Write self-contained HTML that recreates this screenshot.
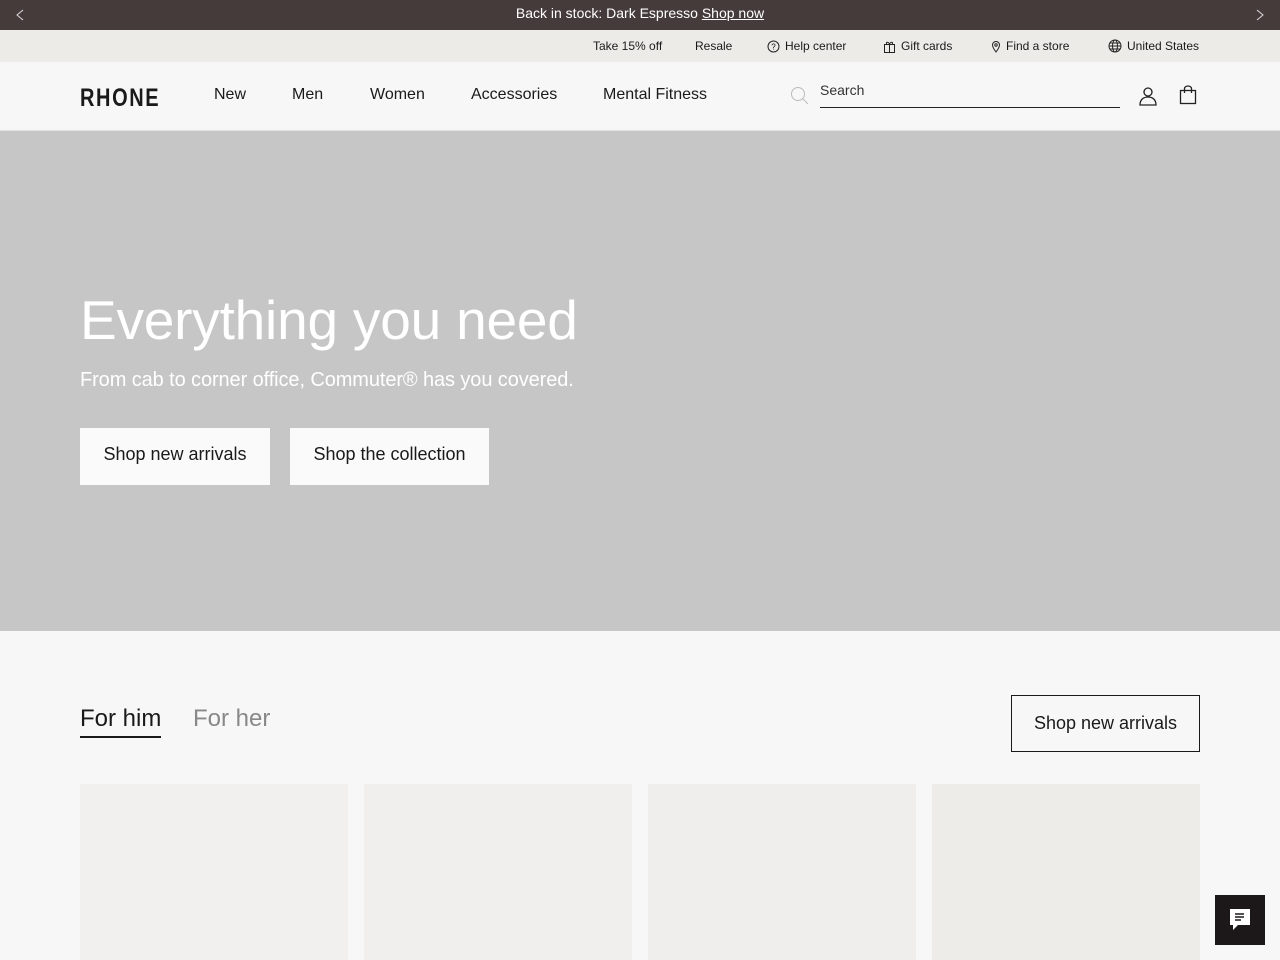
<!DOCTYPE html>
<html><head><style>
*{margin:0;padding:0;box-sizing:border-box}
body{width:1280px;height:960px;overflow:hidden;background:#f8f7f7;font-family:"Liberation Sans",sans-serif;color:#1a1a1a;position:relative}
.top{height:30px;background:#463b3b;color:#fff;font-size:14px;text-align:center;line-height:27px;position:relative}
.top u{text-decoration:underline}
.top svg{position:absolute;top:9px}
.util{height:32px;background:#ecebe8;font-size:12px;position:relative}
.util span{position:absolute;top:9px;display:flex;align-items:center;gap:5px}
.hdr{height:69px;background:#f8f7f7;border-bottom:1px solid #e3e1e0;position:relative}
.logo{position:absolute;left:80px;top:84px;font-size:25px;letter-spacing:2px;font-weight:bold;transform:scaleX(.8);transform-origin:left}
.nav{position:absolute;top:86px;font-size:16px}
.hero{position:absolute;top:131px;left:0;width:1280px;height:500px;background:#c6c6c6}
.hero h1{position:absolute;left:80px;top:157px;font-size:55px;letter-spacing:-.2px;font-weight:normal;color:#fff}
.hero p{position:absolute;left:80px;top:238px;font-size:20px;letter-spacing:-.1px;color:#fff}
.btn{position:absolute;top:297px;height:57px;background:#fafafa;font-size:18px;line-height:52px;text-align:center}
.card{position:absolute;top:784px;width:268px;height:176px;background:#efeeec}
</style></head><body>
<div class="top"><svg style="left:16px" width="8" height="12" viewBox="0 0 8 12" fill="none" stroke="#ddd"><path d="M7 1L1 6l6 5"/></svg>Back in stock: Dark Espresso <u>Shop now</u><svg style="right:16px" width="8" height="12" viewBox="0 0 8 12" fill="none" stroke="#ddd"><path d="M1 1l6 5-6 5"/></svg></div>
<div class="util">
<span style="left:593px">Take 15% off</span>
<span style="left:695px">Resale</span>
<span style="left:767px"><svg width="13" height="13" viewBox="0 0 13 13"><circle cx="6.5" cy="6.5" r="5.5" fill="none" stroke="#222"/><text x="6.5" y="9.5" font-size="8" text-anchor="middle">?</text></svg>Help center</span>
<span style="left:883px"><svg width="13" height="13" viewBox="0 0 13 13" fill="none" stroke="#222"><rect x="1.5" y="4.5" width="10" height="8"/><path d="M6.5 4.5v8M4 4.5c-2-3 2-3 2.5 0M9 4.5c2-3-2-3-2.5 0"/></svg>Gift cards</span>
<span style="left:991px"><svg width="10" height="13" viewBox="0 0 10 13" fill="none" stroke="#222"><path d="M5 12C2 8 1.5 6.5 1.5 5a3.5 3.5 0 017 0c0 1.5-.5 3-3.5 7z"/><circle cx="5" cy="5" r="1.2"/></svg>Find a store</span>
<span style="left:1108px"><svg width="14" height="14" viewBox="0 0 14 14" fill="none" stroke="#222"><circle cx="7" cy="7" r="6"/><ellipse cx="7" cy="7" rx="2.5" ry="6"/><path d="M1 7h12M2 4h10M2 10h10"/></svg>United States</span>
</div>
<div class="hdr"></div>
<div class="logo">RHONE</div>
<div class="nav" style="left:214px">New</div>
<div class="nav" style="left:292px">Men</div>
<div class="nav" style="left:370px">Women</div>
<div class="nav" style="left:471px">Accessories</div>
<div class="nav" style="left:603px">Mental Fitness</div>
<svg style="position:absolute;left:790px;top:86px" width="20" height="20" viewBox="0 0 20 20" fill="none" stroke="#bbb"><circle cx="8" cy="8" r="6.5"/><path d="M13 13l5 5"/></svg>
<div style="position:absolute;left:820px;top:82px;font-size:14px;color:#333">Search</div>
<div style="position:absolute;left:820px;top:107px;width:300px;height:1px;background:#222"></div>
<svg style="position:absolute;left:1138px;top:86px" width="20" height="20" viewBox="0 0 20 20" fill="none" stroke="#222" stroke-width="1.3"><circle cx="10" cy="6" r="4"/><path d="M2 19c0-5 3-8 8-8s8 3 8 8z"/></svg>
<svg style="position:absolute;left:1179px;top:85px" width="18" height="20" viewBox="0 0 18 20" fill="none" stroke="#222" stroke-width="1.3"><rect x="1.5" y="5.5" width="15" height="13"/><path d="M5.5 8V3.5a3.5 2.5 0 017 0V8"/></svg>
<div class="hero">
<h1>Everything you need</h1>
<p>From cab to corner office, Commuter® has you covered.</p>
<div class="btn" style="left:80px;width:190px">Shop new arrivals</div>
<div class="btn" style="left:290px;width:199px">Shop the collection</div>
</div>
<div style="position:absolute;left:80px;top:705px;font-size:24px;padding-bottom:3px;border-bottom:2px solid #1a1a1a">For him</div>
<div style="position:absolute;left:193px;top:705px;font-size:24px;color:#888">For her</div>
<div style="position:absolute;left:1011px;top:695px;width:189px;height:57px;border:1px solid #1a1a1a;font-size:18px;line-height:54px;text-align:center">Shop new arrivals</div>
<div class="card" style="left:80px;background:#f1f0ee"></div>
<div class="card" style="left:364px;background:#f0efed"></div>
<div class="card" style="left:648px;background:#efeeec"></div>
<div class="card" style="left:932px;background:#edece9"></div>
<div style="position:absolute;left:1215px;top:895px;width:50px;height:50px;background:#1c1819"></div>
<svg style="position:absolute;left:1228px;top:907px" width="24" height="26" viewBox="0 0 24 26"><path d="M2 2h20v16H10l-5 5v-5H2z" fill="#fff"/><path d="M7 7h9M7 10h9M7 13h6" stroke="#1c1819" stroke-width="1.5"/></svg>
</body></html>
